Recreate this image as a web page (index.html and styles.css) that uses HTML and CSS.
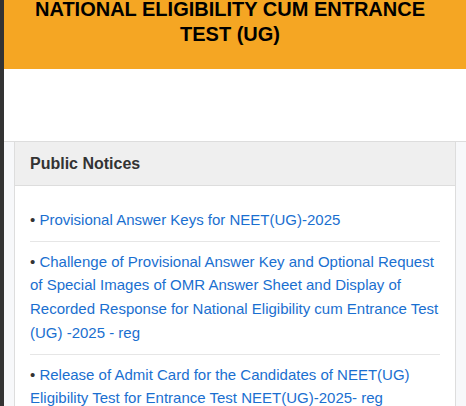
FILE: index.html
```html
<!DOCTYPE html>
<html lang="en">
<head>
<meta charset="utf-8">
<title>NEET (UG)</title>
<link rel="stylesheet" href="styles.css">
</head>
<body>
<div class="page">
  <header class="banner">
    <h1 class="banner-title">NATIONAL ELIGIBILITY CUM ENTRANCE TEST (UG)</h1>
  </header>
  <div class="spacer"></div>
  <section class="content">
    <div class="panel">
      <div class="panel-heading">Public Notices</div>
      <ul class="notice-list">
        <li class="notice">• <a href="#">Provisional Answer Keys for NEET(UG)-2025</a></li>
        <li class="notice">• <a href="#">Challenge of Provisional Answer Key and Optional Request of Special Images of OMR Answer Sheet and Display of Recorded Response for National Eligibility cum Entrance Test (UG) -2025 - reg</a></li>
        <li class="notice">• <a href="#">Release of Admit Card for the Candidates of NEET(UG) Eligibility Test for Entrance Test NEET(UG)-2025- reg</a></li>
      </ul>
    </div>
  </section>
</div>
</body>
</html>
```

FILE: styles.css
```css
html, body {
  margin: 0;
  padding: 0;
  height: 100%;
  overflow: hidden;
}
body {
  font-family: "Liberation Sans", Arial, sans-serif;
  background: #f7f8fa;
  border-left: 4px solid #333333;
}
.page {
  display: flex;
  flex-direction: column;
}
.banner {
  background: #f5a623;
  margin-top: -3px;
  padding: 0 10px 22px 0;
}
.banner-title {
  margin: 0;
  font-size: 20px;
  line-height: 25px;
  font-weight: bold;
  color: #000;
  text-align: center;
  padding: 0 20px;
}
.spacer {
  height: 72px;
  background: #fff;
}
.content {
  border-top: 1px solid #dddddd;
  padding: 0 10px 0 10px;
  background: #f7f8fa;
}
.panel {
  background: #fff;
  border: 1px solid #dddddd;
  border-top: none;
}
.panel-heading {
  background: #efefef;
  border-bottom: 1px solid #dddddd;
  padding: 10px 15px;
  font-size: 16px;
  line-height: 23px;
  font-weight: bold;
  color: #333333;
}
.notice-list {
  list-style: none;
  margin: 0;
  padding: 14px 15px;
}
.notice {
  padding: 8px 0 9px;
  border-bottom: 1px solid #e6e6e6;
  font-size: 15px;
  line-height: 23.7px;
  color: #333333;
}
.notice a {
  color: #1a6fd0;
  text-decoration: none;
}
```
